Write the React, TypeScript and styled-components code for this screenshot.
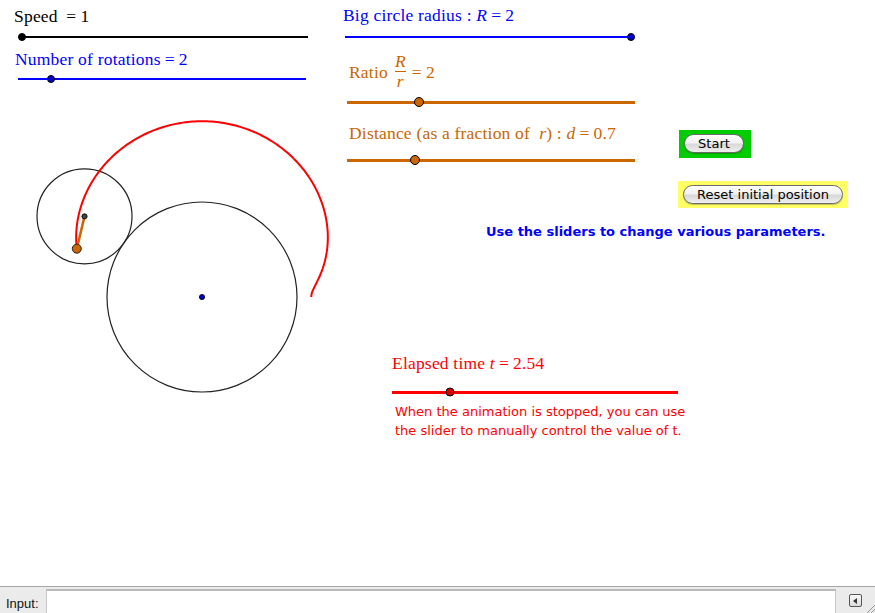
import React from 'react';
import styled, { createGlobalStyle } from 'styled-components';

const GlobalStyle = createGlobalStyle`
  html, body {
    margin: 0;
    padding: 0;
    background: #fff;
  }
  body {
    font-family: "Liberation Sans", Arial, sans-serif;
    overflow: hidden;
  }
`;

const BLACK = '#000000';
const BLUE = '#0000ff';
const ORANGE = '#cc6600';
const RED = '#ff0000';

// fixed circle, rolling circle and the traced point
const O = { x: 202, y: 297 };
const BIG_R = 95;
const SMALL_R = 47.5;
const D = 0.7 * SMALL_R;
const T = 2.54;

const rollingCenter = (t: number) => ({
  x: O.x + (BIG_R + SMALL_R) * Math.cos(t),
  y: O.y - (BIG_R + SMALL_R) * Math.sin(t),
});

const tracePoint = (t: number) => {
  const c = rollingCenter(t);
  const k = (BIG_R + SMALL_R) / SMALL_R;
  return { x: c.x - D * Math.cos(k * t), y: c.y + D * Math.sin(k * t) };
};

const tracePath = () => {
  const pts: string[] = [];
  for (let t = 0; t <= T; t += 0.01) {
    const p = tracePoint(t);
    pts.push(`${p.x.toFixed(2)},${p.y.toFixed(2)}`);
  }
  const end = tracePoint(T);
  pts.push(`${end.x.toFixed(2)},${end.y.toFixed(2)}`);
  return 'M' + pts.join(' L');
};

const Applet = styled.div`
  width: 875px;
  height: 613px;
  display: flex;
  flex-direction: column;
  background: #fff;
`;

const Graphics = styled.div`
  position: relative;
  flex: 1;
  overflow: hidden;
`;

const Drawing = styled.svg`
  position: absolute;
  left: 0;
  top: 0;
`;

// one GeoGebra object on the graphics view: caption, slider, button, text
const CanvasItem = styled.div<{ $x: number; $y: number }>`
  position: absolute;
  left: ${(p) => p.$x}px;
  top: ${(p) => p.$y}px;
  display: flex;
  flex-direction: column;
  align-items: flex-start;
`;

const Caption = styled.div<{ $color: string }>`
  color: ${(p) => p.$color};
  font-family: "Liberation Serif", "DejaVu Serif", serif;
  font-size: 17.5px;
  letter-spacing: 0.2px;
  line-height: 20px;
  white-space: nowrap;
  display: flex;
  align-items: center;
`;

const Var = styled.i`
  font-style: italic;
`;

const Rel = styled.span`
  margin: 0 4px;
`;

const Frac = styled.span`
  display: inline-flex;
  flex-direction: column;
  align-items: center;
  margin: 0 2px 0 7px;
  line-height: 19px;
`;

const FracBar = styled.span`
  align-self: stretch;
  height: 1px;
  background: currentColor;
`;

const Track = styled.div<{ $w: number; $color: string; $weight: number; $gap: number; $inset: number }>`
  position: relative;
  margin-top: ${(p) => p.$gap}px;
  margin-left: ${(p) => p.$inset}px;
  width: ${(p) => p.$w}px;
  height: ${(p) => p.$weight}px;
  background: ${(p) => p.$color};
`;

const Knob = styled.span<{ $size: number; $fill: string }>`
  position: absolute;
  top: 50%;
  width: ${(p) => p.$size}px;
  height: ${(p) => p.$size}px;
  box-sizing: border-box;
  border-radius: 50%;
  background: ${(p) => p.$fill};
  border: 1px solid #000;
  transform: translate(-50%, -50%);
`;

const Note = styled.div<{ $color: string; $bold?: boolean }>`
  color: ${(p) => p.$color};
  font-family: "DejaVu Sans", "Liberation Sans", sans-serif;
  font-size: 13px;
  font-weight: ${(p) => (p.$bold ? 700 : 400)};
  line-height: 19px;
  white-space: nowrap;
`;

const TimeNote = styled(Note)`
  margin: 8px 0 0 3px;
`;

const ButtonFrame = styled.div<{ $w: number; $h: number; $bg: string }>`
  width: ${(p) => p.$w}px;
  height: ${(p) => p.$h}px;
  background: ${(p) => p.$bg};
  box-sizing: border-box;
  padding: 4px 0 0 5px;
`;

const Pill = styled.button<{ $w: number }>`
  width: ${(p) => p.$w}px;
  height: 19px;
  padding: 0;
  border: 1px solid #6b6b6b;
  border-radius: 10px;
  background: linear-gradient(#ffffff 0%, #f2f2f2 45%, #d9d9d9 55%, #eeeeee 100%);
  box-shadow: inset 0 1px 1px rgba(255, 255, 255, 0.9), 0 1px 1px rgba(0, 0, 0, 0.25);
  font-family: "DejaVu Sans", "Liberation Sans", sans-serif;
  font-size: 13px;
  line-height: 17px;
  color: #000;
  cursor: pointer;
`;

const InputBar = styled.div`
  height: 27px;
  box-sizing: border-box;
  border-top: 1px solid #a6a6a6;
  background: #ebebeb;
  display: flex;
  align-items: stretch;
  padding-top: 2px;
`;

const InputLabel = styled.label`
  width: 46px;
  box-sizing: border-box;
  padding: 7px 0 0 6px;
  font-family: "Liberation Sans", Arial, sans-serif;
  font-size: 13px;
  color: #111;
`;

const InputField = styled.input`
  flex: 1;
  margin: 0;
  padding: 0 4px;
  border: none;
  border-top: 2px solid #b9b9b9;
  border-left: 1px solid #c8c8c8;
  border-right: 1px solid #c8c8c8;
  background: #fff;
  outline: none;
`;

const ToolArea = styled.div`
  width: 39px;
  position: relative;
  display: flex;
  justify-content: center;
  padding-top: 5px;
`;

const HistoryButton = styled.span`
  width: 13px;
  height: 13px;
  box-sizing: border-box;
  border: 1px solid #555;
  border-radius: 2px;
  background: linear-gradient(#fafafa, #dcdcdc);
  display: flex;
  align-items: center;
  justify-content: center;
`;

const Grip = styled.svg`
  position: absolute;
  right: 0;
  bottom: 0;
`;

type SliderProps = {
  x: number;
  y: number;
  color: string;
  label: React.ReactNode;
  w: number;
  weight: number;
  gap: number;
  inset: number;
  value: number;
  knob: number;
  fill: string;
  children?: React.ReactNode;
};

const Slider = ({ x, y, color, label, w, weight, gap, inset, value, knob, fill, children }: SliderProps) => (
  <CanvasItem $x={x} $y={y}>
    <Caption $color={color}>{label}</Caption>
    <Track $w={w} $color={color} $weight={weight} $gap={gap} $inset={inset}>
      <Knob $size={knob} $fill={fill} style={{ left: `${value * 100}%` }} />
    </Track>
    {children}
  </CanvasItem>
);

const Construction = () => {
  const c = rollingCenter(T);
  const p = tracePoint(T);
  return (
    <Drawing width={875} height={586} viewBox="0 0 875 586">
      <circle cx={O.x} cy={O.y} r={BIG_R} fill="none" stroke="#222" strokeWidth={1.2} />
      <circle cx={c.x} cy={c.y} r={SMALL_R} fill="none" stroke="#222" strokeWidth={1.2} />
      <path d={tracePath()} fill="none" stroke={RED} strokeWidth={2} strokeLinejoin="round" />
      <line x1={c.x} y1={c.y} x2={p.x} y2={p.y} stroke={ORANGE} strokeWidth={2.5} />
      <circle cx={c.x} cy={c.y} r={2.6} fill="#444" stroke="#000" strokeWidth={0.8} />
      <circle cx={O.x} cy={O.y} r={2.6} fill="#0000cc" stroke="#000" strokeWidth={0.8} />
      <circle cx={p.x} cy={p.y} r={4.5} fill={ORANGE} stroke="#222" strokeWidth={1} />
    </Drawing>
  );
};

const App = () => {
  return (
    <Applet>
      <GlobalStyle />
      <Graphics>
        <Construction />

        <Slider
          x={14} y={6} color={BLACK}
          label={<>Speed&nbsp;<Rel>=</Rel>1</>}
          w={288} weight={2} gap={10} inset={6} value={0.007} knob={8} fill={BLACK}
        />
        <Slider
          x={15} y={49} color={BLUE}
          label={<>Number of rotations<Rel>=</Rel>2</>}
          w={288} weight={2} gap={9} inset={3} value={0.113} knob={8} fill="#0000cc"
        />

        <Slider
          x={343} y={5} color={BLUE}
          label={<>Big circle radius :&nbsp;<Var>R</Var><Rel>=</Rel>2</>}
          w={287} weight={2} gap={11} inset={2} value={0.997} knob={8} fill="#0000cc"
        />
        <Slider
          x={349} y={52} color={ORANGE}
          label={
            <>
              Ratio
              <Frac>
                <Var>R</Var>
                <FracBar />
                <Var>r</Var>
              </Frac>
              <Rel>=</Rel>2
            </>
          }
          w={288} weight={3} gap={9.5} inset={-2} value={0.25} knob={10} fill={ORANGE}
        />
        <Slider
          x={349} y={123} color={ORANGE}
          label={<>Distance (as a fraction of&nbsp;&nbsp;<Var>r</Var>) :&nbsp;<Var>d</Var><Rel>=</Rel>0.7</>}
          w={288} weight={3} gap={15.5} inset={-2} value={0.236} knob={10} fill={ORANGE}
        />

        <Slider
          x={392} y={353} color={RED}
          label={<>Elapsed time&nbsp;<Var>t</Var><Rel>=</Rel>2.54</>}
          w={286} weight={3} gap={17.5} inset={0} value={0.203} knob={9} fill="#dd0000"
        >
          <TimeNote $color={RED}>
            When the animation is stopped, you can use
            <br />
            the slider to manually control the value of t.
          </TimeNote>
        </Slider>

        <CanvasItem $x={679} $y={130}>
          <ButtonFrame $w={72} $h={28} $bg="#00cc00">
            <Pill $w={60}>Start</Pill>
          </ButtonFrame>
        </CanvasItem>
        <CanvasItem $x={678} $y={181}>
          <ButtonFrame $w={170} $h={27} $bg="#ffff66">
            <Pill $w={160}>Reset initial position</Pill>
          </ButtonFrame>
        </CanvasItem>

        <CanvasItem $x={486} $y={222}>
          <Note $color={BLUE} $bold>
            Use the sliders to change various parameters.
          </Note>
        </CanvasItem>
      </Graphics>

      <InputBar>
        <InputLabel>Input:</InputLabel>
        <InputField type="text" />
        <ToolArea>
          <HistoryButton>
            <svg width="5" height="6" viewBox="0 0 5 6">
              <polygon points="4,0 4,6 0,3" fill="#333" />
            </svg>
          </HistoryButton>
          <Grip width="10" height="10" viewBox="0 0 10 10">
            <line x1="10" y1="2" x2="2" y2="10" stroke="#999" strokeWidth="1" />
            <line x1="10" y1="6" x2="6" y2="10" stroke="#999" strokeWidth="1" />
          </Grip>
        </ToolArea>
      </InputBar>
    </Applet>
  );
};

export default App;
